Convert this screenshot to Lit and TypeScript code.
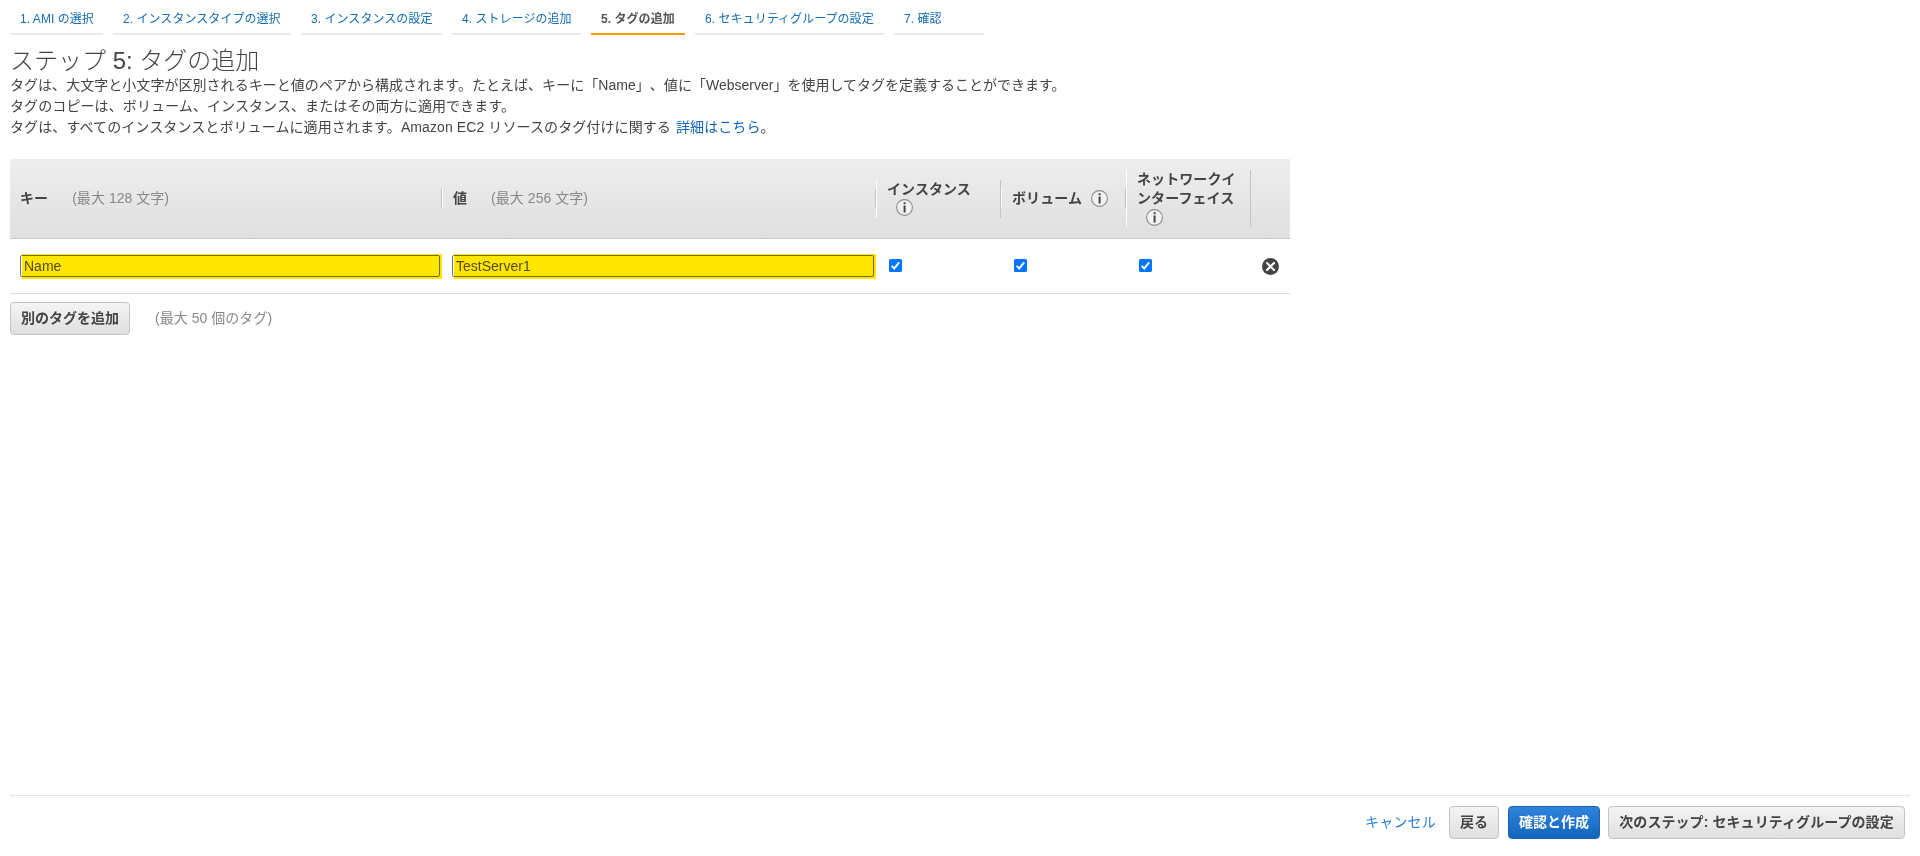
import { LitElement, html, css } from "lit";
import { customElement, property } from "lit/decorators.js";

const infoIcon = html`<svg class="info" width="17" height="17" viewBox="0 0 17 17">
  <circle cx="8.5" cy="8.5" r="7.9" fill="#f2f2f2" stroke="#8c8c8c" stroke-width="1.1" />
  <path d="M7.6 3.3h2v1.9h-2zM7.6 6.4h2v7h-2z" fill="#444" />
</svg>`;

const closeIcon = html`<svg class="close" width="17" height="17" viewBox="0 0 17 17">
  <circle cx="8.5" cy="8.5" r="8.5" fill="#444" />
  <path d="M5 5l7 7M12 5l-7 7" stroke="#fff" stroke-width="2.1" stroke-linecap="round" />
</svg>`;

@customElement("tag-checkbox")
class TagCheckbox extends LitElement {
  static styles = css`
    :host { display: block; width: 13px; height: 13px; }
    svg { display: block; }
  `;
  render() {
    return html`<svg width="13" height="13" viewBox="0 0 13 13">
      <rect width="13" height="13" rx="1.6" fill="#0075ff" />
      <path d="M2.7 6.9l2.5 2.5 5-6" fill="none" stroke="#fff" stroke-width="2" />
    </svg>`;
  }
}

@customElement("wizard-steps")
class WizardSteps extends LitElement {
  @property({ type: Number }) active = 5;
  private steps = [
    { label: "1. AMI の選択", width: 93 },
    { label: "2. インスタンスタイプの選択", width: 178 },
    { label: "3. インスタンスの設定", width: 141 },
    { label: "4. ストレージの追加", width: 129 },
    { label: "5. タグの追加", width: 94 },
    { label: "6. セキュリティグループの設定", width: 189 },
    { label: "7. 確認", width: 90 },
  ];
  static styles = css`
    :host { display: flex; gap: 10px; padding-left: 10px; }
    .step {
      box-sizing: border-box; height: 35px; padding: 9px 0 0 10px; white-space: nowrap; letter-spacing: 0.05px;
      border-bottom: 2px solid #eaeaea; color: #146eb4; font-size: 12px; line-height: 21px;
    }
    .active { border-color: #ff9900; color: #555; font-weight: bold; }
  `;
  render() {
    return this.steps.map(
      (s, i) => html`<div class="step ${i + 1 === this.active ? "active" : ""}" style="width:${s.width}px">${s.label}</div>`
    );
  }
}

@customElement("app-root")
class AppRoot extends LitElement {
  static styles = css`
    :host {
      display: flex; flex-direction: column; height: 856px; background: #fff; color: #444;
      font: 14px/21px "Liberation Sans", "Noto Sans CJK JP", sans-serif;
      text-spacing-trim: space-all;
    }
    * { box-sizing: border-box; }
    h1 { margin: 12px 0 0 10px; font-size: 24px; line-height: 28px; font-weight: 300; height: 28px; }
    .desc { margin: 0 0 0 10px; height: 84px; white-space: nowrap; }
    .desc div { height: 21px; }
    .wide { letter-spacing: 0.1px; }
    .mid { letter-spacing: 0.04px; }
    a { color: #1166bb; margin-left: 1px; }
    .grid { display: grid; grid-template-columns: 432px 434px 125px 125px 125px 39px; width: 1280px; margin-left: 10px; }
    .head {
      height: 80px; align-items: center; line-height: 19px; font-weight: bold;
      background: linear-gradient(#eee, #dfdfdf); border-bottom: 1px solid #c8c8c8;
    }
    .cell { border-left: 1px solid #fff; border-right: 1px solid #c4c4c4; padding-left: 10px; white-space: nowrap; min-height: 19px; letter-spacing: 0.08px; }
    .cell.first { border-left: 0; }
    .two { height: 38px; line-height: 18px; }
    .three { height: 57px; }
    .hint { color: #888; font-weight: normal; letter-spacing: 0.04px; }
    .cell .hint { margin-left: 24px; }
    .info { display: inline-block; vertical-align: -4px; margin-left: 9px; }
    .two .info, .three .info { display: block; margin-top: 1px; }
    .row { height: 55px; border-bottom: 1px solid #ddd; }
    .field { position: relative; height: 22px; margin: 16px 2px 0 10px; border: 1px solid #767676; border-radius: 2px; padding-left: 3px; line-height: 20px; color: #555; }
    .mark { position: absolute; left: 1px; top: -2px; right: -3px; height: 25px; background: #ffe600; mix-blend-mode: multiply; }
    tag-checkbox { margin: 20px 0 0 13px; }
    .close { margin: 19px 0 0 11px; }
    .more { display: flex; align-items: center; padding: 8px 0 0 10px; }
    .btn {
      height: 33px; border: 1px solid #c4c4c4; border-radius: 4px; font-weight: bold; line-height: 31px;
      background: linear-gradient(#f4f4f4, #dfdfdf); text-align: center; color: #444; white-space: nowrap;
    }
    .add { width: 120px; margin-right: 25px; }
    .footer { margin: auto 10px 0; height: 61px; border-top: 1px solid #e6e6e6; display: flex; justify-content: flex-end; padding: 10px 5px 0 0; }
    .cancel { color: #2a7fdc; line-height: 33px; margin-right: 13px; width: 71px; letter-spacing: 0.2px; white-space: nowrap; }
    .back { width: 50px; }
    .launch { width: 92px; margin: 0 8px 0 9px; color: #fff; border-color: #1a63b0; background: linear-gradient(#2f83dd, #1166bb); }
    .next { width: 297px; letter-spacing: 0.08px; }
  `;
  render() {
    return html`
      <wizard-steps active="5"></wizard-steps>
      <h1>ステップ 5: タグの追加</h1>
      <div class="desc">
        <div><span class="mid">タグは、大文字と小文字が区別されるキーと値のペアから構成されます。たとえば、キーに「Name」、値に</span>「Webserver」を使用してタグを定義することができます。</div>
        <div class="wide">タグのコピーは、ボリューム、インスタンス、またはその両方に適用できます。</div>
        <div class="wide">タグは、すべてのインスタンスとボリュームに適用されます。Amazon EC2 リソースのタグ付けに関する <a>詳細はこちら</a>。</div>
      </div>
      <div class="grid head">
        <div class="cell first">キー<span class="hint">(最大 128 文字)</span></div>
        <div class="cell">値<span class="hint">(最大 256 文字)</span></div>
        <div class="cell two">インスタンス<br />${infoIcon}</div>
        <div class="cell">ボリューム${infoIcon}</div>
        <div class="cell three">ネットワークイ<br />ンターフェイス<br />${infoIcon}</div>
      </div>
      <div class="grid row">
        <div class="field">Name<div class="mark"></div></div>
        <div class="field">TestServer1<div class="mark"></div></div>
        <tag-checkbox></tag-checkbox>
        <tag-checkbox></tag-checkbox>
        <tag-checkbox></tag-checkbox>
        ${closeIcon}
      </div>
      <div class="more"><div class="btn add">別のタグを追加</div><span class="hint">(最大 50 個のタグ)</span></div>
      <div class="footer">
        <div class="cancel">キャンセル</div>
        <div class="btn back">戻る</div>
        <div class="btn launch">確認と作成</div>
        <div class="btn next">次のステップ: セキュリティグループの設定</div>
      </div>
    `;
  }
}
